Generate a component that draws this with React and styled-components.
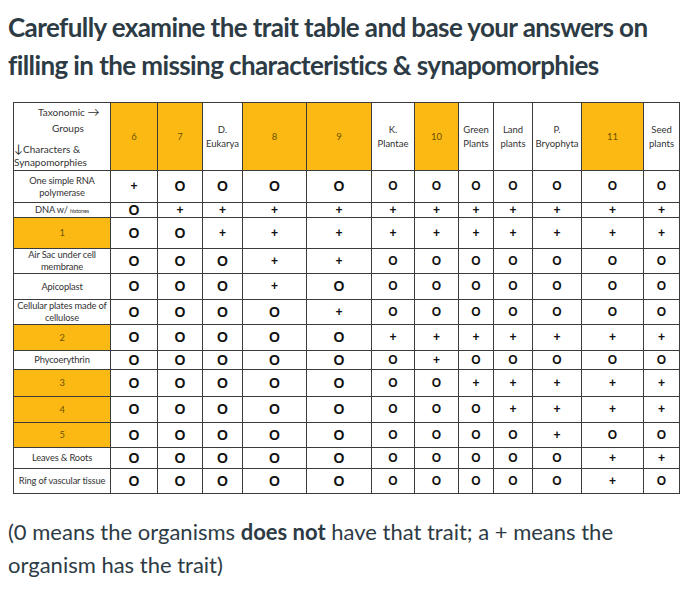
import React from 'react';
import styled, { createGlobalStyle } from 'styled-components';

const GlobalStyle = createGlobalStyle`
  body {
    margin: 0;
    background: #fff;
  }
`;

const Page = styled.div`
  width: 700px;
  height: 612px;
  padding: 8px 0 0 8px;
  box-sizing: border-box;
  font-family: Lato, "Open Sans", sans-serif;
  color: #2d3b45;
  overflow: hidden;
`;

const Title = styled.h1`
  margin: 0;
  font-size: 26px;
  font-weight: 700;
  line-height: 38px;
  letter-spacing: -0.6px;
`;

const Grid = styled.table`
  margin: 18px 0 0 5px;
  width: 667px;
  border-collapse: collapse;
  table-layout: fixed;
  font-family: "Liberation Sans", Arial, sans-serif;
  color: #111;
`;

const Cell = styled.td`
  border: 1px solid #3b3b3b;
  padding: 0;
  text-align: center;
  vertical-align: middle;
  background: #fff;
  font-weight: 700;
  font-size: ${p => (p.$big ? '14px' : '12px')};
  line-height: 11px;
`;

const HeadCell = styled.th`
  border: 1px solid #3b3b3b;
  padding: 0;
  font-family: Lato, "Open Sans", sans-serif;
  font-weight: 400;
  font-size: 9.5px;
  line-height: 14px;
  color: ${p => (p.$gold ? '#6a5300' : '#333')};
  background: ${p => (p.$gold ? '#fdb913' : '#fff')};
`;

const Label = styled.td`
  border: 1px solid #3b3b3b;
  padding: 0;
  text-align: center;
  font-family: Lato, "Open Sans", sans-serif;
  font-size: 9.3px;
  letter-spacing: -0.15px;
  line-height: 12px;
  color: ${p => (p.$gold ? '#6a5300' : '#333')};
  background: ${p => (p.$gold ? '#fdb913' : '#fff')};
  white-space: ${p => (p.$nowrap ? 'nowrap' : 'normal')};
`;

const Tiny = styled.span`
  font-size: 5.5px;
`;

const Corner = styled.div`
  height: 64px;
  display: flex;
  flex-direction: column;
  justify-content: space-between;
  text-align: left;
  font-size: 10px;
  line-height: 13px;
  white-space: nowrap;
`;

const CornerGroup = styled.div`
  display: flex;
  flex-direction: column;
  gap: ${p => p.$gap || 0}px;
`;

const CornerLine = styled.span`
  padding-left: ${p => p.$indent || 0}px;
`;

const Arrow = styled.span`
  font-size: 12px;
`;

const Note = styled.p`
  margin: 21px 0 0;
  width: 620px;
  font-size: 22px;
  line-height: 33px;
`;

const widths = [97, 47, 45, 40, 64, 65, 43, 44, 35, 39, 49, 62, 36];

const headers = [
  { t: '6', gold: true },
  { t: '7', gold: true },
  { t: ['D.', 'Eukarya'] },
  { t: '8', gold: true },
  { t: '9', gold: true },
  { t: ['K.', 'Plantae'] },
  { t: '10', gold: true },
  { t: ['Green', 'Plants'] },
  { t: ['Land', 'plants'] },
  { t: ['P.', 'Bryophyta'] },
  { t: '11', gold: true },
  { t: ['Seed', 'plants'] },
];

const rows = [
  { label: ['One simple RNA', 'polymerase'], h: 32, v: '+OOOOOOOOOOO' },
  { label: 'DNA w/ ', tiny: 'histones', h: 15, v: 'O+++++++++++' },
  { label: '1', gold: true, h: 31, v: 'OO++++++++++' },
  { label: ['Air Sac under cell', 'membrane'], h: 25, v: 'OOO++OOOOOOO' },
  { label: 'Apicoplast', h: 26, v: 'OOO+OOOOOOOO' },
  { label: ['Cellular plates made of', 'cellulose'], h: 25, v: 'OOOO+OOOOOOO' },
  { label: '2', gold: true, h: 26, v: 'OOOOO+++++++' },
  { label: 'Phycoerythrin', h: 19, v: 'OOOOOO+OOOOO' },
  { label: '3', gold: true, h: 27, v: 'OOOOOOO+++++' },
  { label: '4', gold: true, h: 26, v: 'OOOOOOOO++++' },
  { label: '5', gold: true, h: 25, v: 'OOOOOOOOO+OO' },
  { label: 'Leaves & Roots', h: 21, v: 'OOOOOOOOOO++' },
  { label: 'Ring of vascular tissue', h: 25, v: 'OOOOOOOOOO+O' },
];

export default function App() {
  return (
    <Page>
      <GlobalStyle />
      <Title>
        Carefully examine the trait table and base your answers on
        <br />
        filling in the missing characteristics &amp; synapomorphies
      </Title>

      <Grid>
        <colgroup>
          {widths.map((w, i) => (
            <col key={i} style={{ width: w }} />
          ))}
        </colgroup>
        <thead>
          <tr style={{ height: 68 }}>
            <HeadCell>
              <Corner>
                <CornerGroup $gap={3}>
                  <CornerLine $indent={24}>
                    Taxonomic <Arrow>→</Arrow>
                  </CornerLine>
                  <CornerLine $indent={38}>Groups</CornerLine>
                </CornerGroup>
                <CornerGroup>
                  <CornerLine>
                    <Arrow>↓</Arrow>Characters &amp;
                  </CornerLine>
                  <CornerLine>Synapomorphies</CornerLine>
                </CornerGroup>
              </Corner>
            </HeadCell>
            {headers.map((h, i) => (
              <HeadCell key={i} $gold={h.gold}>
                {Array.isArray(h.t) ? (
                  <>
                    {h.t[0]}
                    <br />
                    {h.t[1]}
                  </>
                ) : (
                  h.t
                )}
              </HeadCell>
            ))}
          </tr>
        </thead>
        <tbody>
          {rows.map((r, ri) => (
            <tr key={ri} style={{ height: r.h }}>
              <Label $gold={r.gold} $nowrap>
                {Array.isArray(r.label) ? (
                  <>
                    {r.label[0]}
                    <br />
                    {r.label[1]}
                  </>
                ) : (
                  r.label
                )}
                {r.tiny && <Tiny>{r.tiny}</Tiny>}
              </Label>
              {r.v.split('').map((c, ci) => (
                <Cell key={ci} $big={ci < 5 && c === 'O'}>
                  {c}
                </Cell>
              ))}
            </tr>
          ))}
        </tbody>
      </Grid>

      <Note>
        (0 means the organisms <b>does not</b> have that trait; a + means the organism has the trait)
      </Note>
    </Page>
  );
}
